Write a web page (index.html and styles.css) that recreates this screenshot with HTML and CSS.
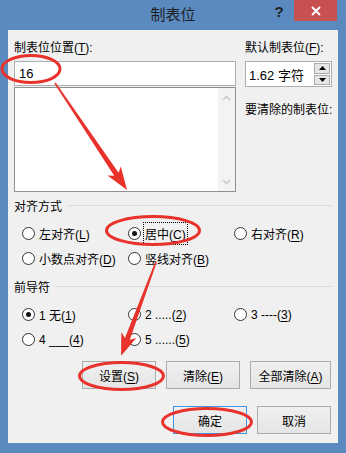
FILE: index.html
```html
<!DOCTYPE html>
<html lang="zh-CN">
<head>
    <meta charset="UTF-8">
    <title>制表位</title>
    <link rel="stylesheet" href="styles.css">
</head>
<body>

    <div class="titlebar">
        <span class="title">制表位</span>
        <span class="help">?</span>
        <span class="close">
            <svg width="10" height="10" viewBox="0 0 10 10"><path d="M1 1 L9 9 M9 1 L1 9" stroke="#fff" stroke-width="2"/></svg>
        </span>
    </div>

    <div class="client">
        <div class="top">
            <div class="col-left">
                <div class="field-label">制表位位置(<u>T</u>):</div>
                <div class="textbox">16</div>
                <div class="listbox">
                    <div class="list-scroll">
                        <svg width="9" height="6" viewBox="0 0 9 6"><path d="M1 5 L4.5 1.5 L8 5" fill="none" stroke="#c8c8c8" stroke-width="1.5"/></svg>
                        <svg width="9" height="6" viewBox="0 0 9 6"><path d="M1 1 L4.5 4.5 L8 1" fill="none" stroke="#c8c8c8" stroke-width="1.5"/></svg>
                    </div>
                </div>
            </div>
            <div class="col-right">
                <div class="field-label">默认制表位(<u>F</u>):</div>
                <div class="spin">
                    <span class="spin-value">1.62 字符</span>
                    <span class="spin-btns">
                        <span class="spin-btn"><svg width="7" height="4" viewBox="0 0 7 4"><path d="M0 4 L3.5 0 L7 4 Z" fill="#000"/></svg></span>
                        <span class="spin-btn"><svg width="7" height="4" viewBox="0 0 7 4"><path d="M0 0 L3.5 4 L7 0 Z" fill="#000"/></svg></span>
                    </span>
                </div>
                <div class="clear-label">要清除的制表位:</div>
            </div>
        </div>

        <div class="group-head">对齐方式</div>
        <div class="radio-grid">
            <span class="radio"><span class="dot"></span><span>左对齐(<u>L</u>)</span></span>
            <span class="radio"><span class="dot on"></span><span class="focus">居中(<u>C</u>)</span></span>
            <span class="radio"><span class="dot"></span><span>右对齐(<u>R</u>)</span></span>
            <span class="radio"><span class="dot"></span><span>小数点对齐(<u>D</u>)</span></span>
            <span class="radio"><span class="dot"></span><span>竖线对齐(<u>B</u>)</span></span>
        </div>

        <div class="group-head second">前导符</div>
        <div class="radio-grid">
            <span class="radio"><span class="dot on"></span><span>1 无(<u>1</u>)</span></span>
            <span class="radio"><span class="dot"></span><span>2 .....(<u>2</u>)</span></span>
            <span class="radio"><span class="dot"></span><span>3 ----(<u>3</u>)</span></span>
            <span class="radio"><span class="dot"></span><span>4 ___(<u>4</u>)</span></span>
            <span class="radio"><span class="dot"></span><span>5 ......(<u>5</u>)</span></span>
        </div>

        <div class="btn-row">
            <span class="btn"><span>设置(<u>S</u>)</span></span>
            <span class="btn"><span>清除(<u>E</u>)</span></span>
            <span class="btn wide"><span>全部清除(<u>A</u>)</span></span>
        </div>
        <div class="btn-row last">
            <span class="btn default">确定</span>
            <span class="btn">取消</span>
        </div>
    </div>

    <!-- red hand-drawn marks over the dialog -->
    <svg class="marks" width="346" height="453" viewBox="0 0 346 453">
        <g fill="none" stroke="#e8322b" stroke-width="3">
            <ellipse cx="31" cy="69" rx="29" ry="13.5"/>
            <ellipse cx="153" cy="230.5" rx="46.5" ry="14"/>
            <ellipse cx="121.5" cy="376" rx="42" ry="13.5"/>
            <ellipse cx="207" cy="422" rx="44.5" ry="13.5"/>
        </g>
        <g fill="#e8322b">
            <polygon transform="translate(55,83) rotate(56.06)" points="0,-0.8 110,-2.6 106,-8 129,0 106,8 110,2.6 0,0.8"/>
            <polygon transform="translate(156,262) rotate(110.42)" points="0,-0.8 82,-2.6 78,-8 100,0 78,8 82,2.6 0,0.8"/>
        </g>
    </svg>

</body>
</html>
```

FILE: styles.css
```css
* {
    box-sizing: border-box;
}
body {
    margin: 0;
    width: 346px;
    height: 453px;
    background-color: #5a8ac0; /* window frame */
    font-family: "Liberation Sans", "Noto Sans CJK SC", sans-serif;
    font-size: 12px;
    color: #000;
    position: relative;
    overflow: hidden;
}
u {
    text-decoration-thickness: 1px;
    text-underline-offset: 2px;
}

/* title bar */
.titlebar {
    height: 30px;
    display: flex;
    align-items: flex-start;
    padding-right: 9px;
}
.title {
    flex: 1;
    text-align: center;
    padding-left: 76px;
    font-size: 15px;
    line-height: 30px;
    color: #1e1e1e;
}
.help {
    width: 18px;
    margin-right: 6px;
    text-align: center;
    font-weight: bold;
    font-size: 15px;
    line-height: 24px;
    color: #222;
}
.close {
    width: 43px;
    height: 21px;
    background-color: #c75050;
    display: flex;
    align-items: center;
    justify-content: center;
}

/* dialog body */
.client {
    margin: 0 8px;
    height: 413px;
    background-color: #f0f0f0;
    padding: 10px 6px 0 6px;
}
.top {
    display: flex;
    gap: 9px;
}
.col-left {
    width: 222px;
}
.col-right {
    width: 87px;
}
.field-label {
    line-height: 16px;
    height: 16px;
    white-space: nowrap;
}
.textbox {
    margin-top: 5px;
    height: 25px;
    border: 1px solid #abadb3;
    background-color: #fff;
    padding-left: 4px;
    line-height: 23px;
    font-size: 13px;
}
.listbox {
    margin-top: 1px;
    height: 105px;
    border: 1px solid #8e8f8f;
    background-color: #fff;
    display: flex;
    justify-content: flex-end;
}
.list-scroll {
    width: 17px;
    background-color: #f3f3f3;
    display: flex;
    flex-direction: column;
    justify-content: space-between;
    align-items: center;
    padding: 7px 0 6px;
}
.spin {
    margin-top: 5px;
    height: 26px;
    border: 1px solid #abadb3;
    background-color: #fff;
    display: flex;
    align-items: center;
    padding-left: 3px;
}
.spin-value {
    flex: 1;
    font-size: 13px;
    white-space: nowrap;
}
.spin-btns {
    width: 16px;
    height: 22px;
    margin-right: 1px;
    display: flex;
    flex-direction: column;
    gap: 1px;
}
.spin-btn {
    flex: 1;
    border: 1px solid #acacac;
    background-color: #e6e6e6;
    display: flex;
    align-items: center;
    justify-content: center;
}
.clear-label {
    margin-top: 15px;
    line-height: 16px;
    white-space: nowrap;
}

/* group boxes */
.group-head {
    display: flex;
    align-items: center;
    margin-top: 7px;
    line-height: 16px;
}
.group-head.second {
    margin-top: 9px;
}
.group-head::after {
    content: "";
    flex: 1;
    height: 1px;
    background-color: #dcdcdc;
    margin-left: 5px;
    margin-top: -3px;
}
.radio-grid {
    display: grid;
    grid-template-columns: 106px 106px 1fr;
    grid-auto-rows: 25px;
    margin-top: 6px;
    padding-left: 8px;
}
.radio {
    display: flex;
    align-items: center;
    gap: 4px;
    white-space: nowrap;
}
.dot {
    width: 13px;
    height: 13px;
    border: 1px solid #333;
    border-radius: 50%;
    background-color: #fff;
    display: flex;
    align-items: center;
    justify-content: center;
}
.dot.on::after {
    content: "";
    width: 5px;
    height: 5px;
    border-radius: 50%;
    background-color: #111;
}
.focus {
    border: 1px dotted #000;
    padding: 2px 1px;
    margin-left: -2px;
}

/* buttons */
.btn-row {
    display: flex;
    justify-content: flex-end;
    gap: 10px;
    margin-top: 9px;
    margin-right: 1px;
}
.btn-row.last {
    margin-top: 17px;
}
.btn {
    width: 74px;
    height: 28px;
    border: 1px solid #acacac;
    background: linear-gradient(#f0f0f0, #e5e5e5);
    display: flex;
    align-items: center;
    justify-content: center;
    white-space: nowrap;
}
.btn.wide {
    width: 81px;
}
.btn.default {
    border-color: #3c97e4;
}

.marks {
    position: absolute;
    left: 0;
    top: 0;
    pointer-events: none;
}
```
